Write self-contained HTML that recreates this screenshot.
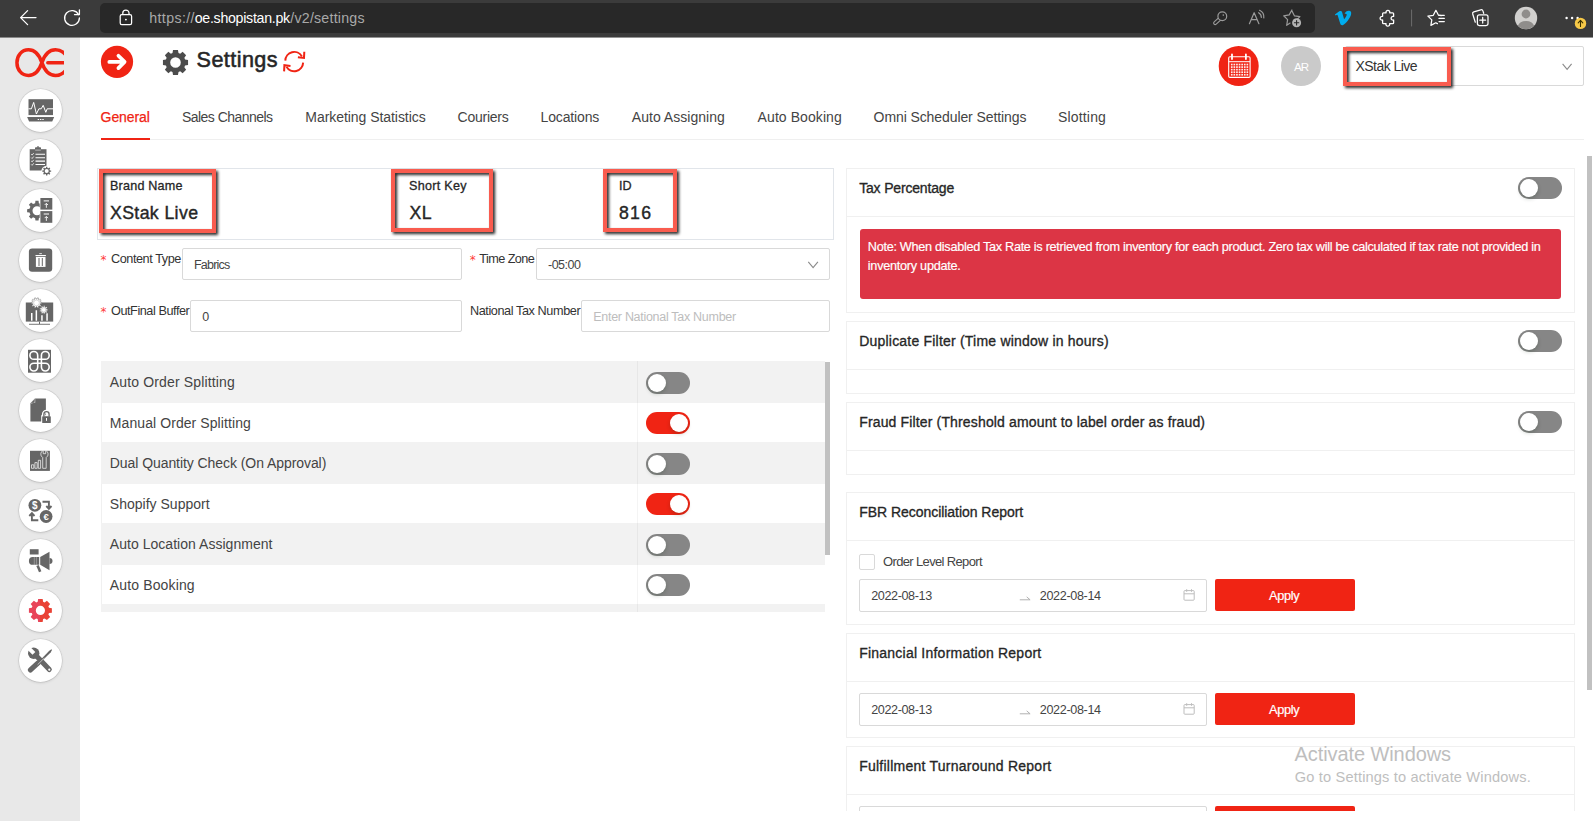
<!DOCTYPE html><html lang="en"><head>
<meta charset="utf-8">
<title>Settings</title>
<style>
*{box-sizing:border-box;margin:0;padding:0}
html,body{width:1593px;height:821px;overflow:hidden;background:#fff}
body{font-family:"Liberation Sans",sans-serif;font-size:14px;color:#2b2b2b;position:relative}
.a{position:absolute}
.sb{font-weight:normal;-webkit-text-stroke:0.45px currentColor}
#chrome{position:absolute;left:0;top:0;width:1593px;height:37px;background:#3b3b3b}
#urlbar{position:absolute;left:100px;top:3px;width:1215px;height:30px;background:#282828;border-radius:5px}
#chrome svg{position:absolute;overflow:visible}
#side{position:absolute;left:0;top:37px;width:80px;height:784px;background:#e8e8e8}
.ic{position:absolute;left:18px;width:44px;height:44px}
.ic::before{content:"";position:absolute;left:.7px;top:.7px;width:43px;height:43px;border-radius:50%;background:#fff;box-shadow:0 0 0 0.6px rgba(0,0,0,.10),0 1px 3px rgba(0,0,0,.12)}
.ic svg{position:absolute;left:0;top:0;width:44px;height:44px;overflow:visible}
.hl{position:absolute;border:4px solid #f95c4f;filter:drop-shadow(2.2px 2.6px 1.5px rgba(0,0,0,.85))}
.inp{position:absolute;height:32px;border:1px solid #d9d9d9;border-radius:2px;background:#fff}
.band{position:absolute;left:101px;width:724px;background:#f2f2f2}
.tg{position:absolute;width:44px;height:22px;border-radius:11px;background:#868686}
.tg i{position:absolute;left:2px;top:2px;width:18px;height:18px;border-radius:50%;background:#fff;box-shadow:0 2px 4px rgba(0,35,11,.2)}
.tg.on{background:#f02414}
.tg.on i{left:24px}
.card{position:absolute;left:846px;width:729px;border:1px solid #f0f0f0;background:#fff}
.card u{position:absolute;left:0;top:47px;width:727px;height:1px;background:#f0f0f0}
.btn{position:absolute;left:1215px;width:140px;height:32px;background:#f02414;border-radius:2px}
.rng{position:absolute;left:859px;width:348px;height:33px;border:1px solid #d9d9d9;border-radius:2px;background:#fff}
#clip{position:absolute;left:80px;top:37px;width:1513px;height:774px;overflow:hidden}
#pg{position:absolute;left:-80px;top:-37px;width:1593px;height:900px}
</style>
</head>
<body>
<div id="chrome">
  <div id="urlbar"></div>
  <svg style="left:0;top:0" width="1593" height="37" viewBox="0 0 1593 37" fill="none" stroke-linecap="round" stroke-linejoin="round">
    <!-- back -->
    <path d="M36 17.6H20.6M27.6 10.6l-7 7 7 7" stroke="#fff" stroke-width="1.3"></path>
    <!-- refresh -->
    <path d="M78.6 14.6A7.4 7.4 0 1 0 79.4 18" stroke="#fff" stroke-width="1.3"></path>
    <path d="M79.4 9.9v4.7h-4.9" stroke="#fff" stroke-width="1.3"></path>
    <!-- lock -->
    <rect x="120.2" y="14.6" width="11.4" height="10" rx="1.6" stroke="#fff" stroke-width="1.25"></rect>
    <path d="M122.8 14.4v-1.3a3.1 3.1 0 0 1 6.2 0v1.3" stroke="#fff" stroke-width="1.25"></path>
    <circle cx="125.9" cy="19.6" r="0.95" fill="#fff" stroke="none"></circle>
    <!-- key -->
    <path d="M1219.600 19l-4.400 4" stroke="#9b9b9b" stroke-width="4.200"></path>
    <path d="M1221 17.700l-5.800 5.300" stroke="#282828" stroke-width="1.900"></path>
    <circle cx="1222.300" cy="16.200" r="4.400" fill="#282828" stroke="#9b9b9b" stroke-width="1.200"></circle>
    <circle cx="1223.300" cy="15.100" r="0.800" fill="#9b9b9b" stroke="none"></circle>
    <!-- read aloud -->
    <g stroke="#9b9b9b" stroke-width="1.200">
      <path d="M1249.400 23.700l4.750-11 4.750 11M1251.200 19.600h5.900"></path>
      <path d="M1258.600 12.700a5 5 0 0 1 2.700 4.700M1259.600 10.300a7.600 7.600 0 0 1 4.200 7.600"></path>
    </g>
    <!-- star plus -->
    <path d="M1292 10.9l2.5 5 5.4 0.8-3.4 3.4M1290.1 23.1l-3.4 2.2 0.9-5.7-3.9-3.8 5.5-0.9 2.7-4.9" stroke="#9b9b9b" stroke-width="1.2"></path>
    <circle cx="1296.6" cy="22.7" r="4.5" fill="#b4b4b4" stroke="none"></circle>
    <path d="M1294.4 22.7h4.4M1296.6 20.5v4.4" stroke="#282828" stroke-width="1.1"></path>
    <!-- vimeo -->
    <path d="M1334.900 14.600L1339.300 11.300C1340.400 10.700 1341.700 10.800 1342.100 12.200L1344.100 19.200C1345.500 17.700 1346.800 15.700 1346.700 14.500C1346.600 13.600 1345.700 13.500 1344.600 14C1345.300 11.900 1347 10.700 1349 10.800C1350.800 10.900 1351.500 12.200 1351.100 14.200C1350.400 17.700 1346 23.600 1343.100 25C1341.600 25.600 1340.600 24.800 1340.200 23.600L1337.700 15.500C1337.400 14.600 1336.800 14.700 1335.700 15.600Z" fill="#00adef" stroke="none"></path>
    <!-- puzzle -->
    <path d="M1383.500 12.800H1386.100a1.900 1.900 0 1 1 3.600 0H1392.700a0.900 0.900 0 0 1 0.900 0.900V16.400a1.900 1.900 0 1 0 0 3.600V22.700a0.900 0.900 0 0 1-0.900 0.900H1389.600a1.900 1.900 0 1 1-3.600 0H1383.500a0.900 0.900 0 0 1-0.900-0.900V20a1.900 1.900 0 1 1 0-3.600V13.700a0.900 0.900 0 0 1 0.900-0.900z" stroke="#fff" stroke-width="1.300"></path>
    <!-- separator -->
    <path d="M1411.600 10v16" stroke="#6e6e6e" stroke-width="1"></path>
    <!-- favorites -->
    <path d="M1441.200 15.600l-2.700-0.400-2.600-4.900-2.600 5-5.400 0.800 3.900 3.800-0.900 5.500 4.900-2.600 1.600 0.800" stroke="#fff" stroke-width="1.250"></path>
    <path d="M1439 15.300h5.300M1439 18.400h5.300M1439 21.500h5.300" stroke="#fff" stroke-width="1.250"></path>
    <!-- collections -->
    <path d="M1475.300 22.200l-2.600-8.200a1.700 1.700 0 0 1 1.100-2.100l7-2.100a1.700 1.700 0 0 1 2.100 1.100l0.800 2.400" stroke="#fff" stroke-width="1.250"></path>
    <rect x="1477.400" y="14.900" width="10.600" height="10.600" rx="1.900" stroke="#fff" stroke-width="1.250"></rect>
    <path d="M1479.800 20.200h5.800M1482.700 17.300v5.800" stroke="#fff" stroke-width="1.250"></path>
    <!-- profile -->
    <circle cx="1526" cy="18" r="11.200" fill="#d1d0ce" stroke="none"></circle>
    <circle cx="1526" cy="14" r="4.400" fill="#8f8d8b" stroke="none"></circle>
    <path d="M1517.900 25.700a8.400 6.400 0 0 1 16.200 0a11.200 11.200 0 0 1-16.200 0z" fill="#8f8d8b" stroke="none"></path>
    <!-- dots -->
    <circle cx="1566.600" cy="18" r="1.200" fill="#fff" stroke="none"></circle>
    <circle cx="1572.100" cy="18" r="1.200" fill="#fff" stroke="none"></circle>
    <circle cx="1577.600" cy="18" r="1.200" fill="#fff" stroke="none"></circle>
    <circle cx="1580.500" cy="23.400" r="5.700" fill="#f7c948" stroke="none"></circle>
    <path d="M1580.500 26.400v-5.800M1578.200 22.800l2.300-2.400 2.300 2.400" stroke="#3a3000" stroke-width="1.100"></path>
  </svg>
  <span style="color: rgb(169, 169, 169); position: absolute; white-space: nowrap; font-size: 14.2px; line-height: 1; left: 149.3px; top: 11.01px; letter-spacing: 0.372px;">https://</span>
  <span style="color: rgb(255, 255, 255); position: absolute; white-space: nowrap; font-size: 14.2px; line-height: 1; left: 194.7px; top: 11.01px; letter-spacing: -0.278px;">oe.shopistan.pk</span>
  <span style="color: rgb(169, 169, 169); position: absolute; white-space: nowrap; font-size: 14.2px; line-height: 1; left: 290.3px; top: 11.01px; letter-spacing: 0.221px;">/v2/settings</span>
</div>

<div id="side">
<svg class="a" style="left:0;top:0;overflow:hidden" width="64.3" height="60" viewBox="0 37 64.3 60" fill="none"><path d="M66.500 69.500C63.500 73.500 59.500 75.450 55.500 75.450C48.200 75.450 44.300 69.700 41.900 62.650C39.500 55.600 35.700 49.850 28.500 49.850C21.600 49.850 16.950 55.700 16.950 62.650C16.950 69.600 21.600 75.450 28.500 75.450C35.700 75.450 39.500 69.700 41.900 62.650C44.300 55.600 48.200 49.850 55.500 49.850C59.500 49.850 63.500 51.800 66.500 55.800M47.800 62.650H66" stroke="#f02414" stroke-width="3.500" stroke-linecap="round"></path></svg>
<div class="ic" style="top:51px"><svg viewBox="0 0 44 44" fill="#666"><rect x="10.500" y="11.200" width="24.500" height="15.900"></rect><path d="M9.100 28.900h27.100l-2 4.600h-23.100z"></path><path d="M10.500 20.800h2.900l2.300-6.400 2.700 11.600 2.500-5.200h2.300l2-3.500 2.600 7 1.400-3.500h5.800" fill="none" stroke="#fff" stroke-width="1"></path><rect x="19.700" y="31" width="1.400" height="1" fill="#fff"></rect><rect x="22" y="31" width="1.400" height="1" fill="#fff"></rect><rect x="24.300" y="31" width="1.400" height="1" fill="#fff"></rect></svg></div>
<div class="ic" style="top:101px"><svg viewBox="0 0 44 44" fill="#666"><rect x="11.700" y="11.200" width="16.800" height="21.300"></rect><rect x="17" y="9.300" width="6" height="3" rx="0.800"></rect><rect x="19.400" y="8" width="1.200" height="2"></rect><rect x="17.200" y="11.600" width="5.600" height="1" fill="#fff" opacity=".55"></rect>
<path d="M17.500 16.300h9.500M17.500 19.700h9.500M17.500 23.100h9.500M17.500 26.500h9.500" stroke="#fff" stroke-width="1.100"></path><path d="M13.200 16.200l0.900 0.900 1.600-2M13.200 19.600l0.900 0.900 1.600-2M13.200 23l0.900 0.900 1.600-2M13.200 26.400l0.900 0.900 1.600-2" fill="none" stroke="#fff" stroke-width="0.800"></path>
<circle cx="28.700" cy="33.100" r="5.300" fill="#fff"></circle><path d="M31.92 32.38L33.16 32.47L33.16 33.73L31.92 33.82L31.49 34.87L32.30 35.80L31.40 36.70L30.47 35.89L29.42 36.32L29.33 37.56L28.07 37.56L27.98 36.32L26.93 35.89L26.00 36.70L25.10 35.80L25.91 34.87L25.48 33.82L24.24 33.73L24.24 32.47L25.48 32.38L25.91 31.33L25.10 30.40L26.00 29.50L26.93 30.31L27.98 29.88L28.07 28.64L29.33 28.64L29.42 29.88L30.47 30.31L31.40 29.50L32.30 30.40L31.49 31.33ZM26.70 33.10a2.00 2.00 0 1 0 4.00 0a2.00 2.00 0 1 0 -4.00 0Z" fill-rule="evenodd"></path></svg></div>
<div class="ic" style="top:151px"><svg viewBox="0 0 44 44" fill="#666"><path d="M26.47 20.83L28.88 21.14L28.88 24.26L26.47 24.57L25.60 26.66L27.09 28.58L24.88 30.79L22.96 29.30L20.87 30.17L20.56 32.58L17.44 32.58L17.13 30.17L15.04 29.30L13.12 30.79L10.91 28.58L12.40 26.66L11.53 24.57L9.12 24.26L9.12 21.14L11.53 20.83L12.40 18.74L10.91 16.82L13.12 14.61L15.04 16.10L17.13 15.23L17.44 12.82L20.56 12.82L20.87 15.23L22.96 16.10L24.88 14.61L27.09 16.82L25.60 18.74ZM14.50 22.70a4.50 4.50 0 1 0 9.00 0a4.50 4.50 0 1 0 -9.00 0Z" fill-rule="evenodd"></path><rect x="21.700" y="9" width="14" height="27" fill="#fff"></rect><rect x="22.400" y="10" width="11.900" height="11.600"></rect><rect x="22.400" y="23.100" width="11.900" height="11.700"></rect>
<path d="M25.700 12.900h5.300M25.700 26h5.300" stroke="#fff" stroke-width="1"></path><path d="M28.350 19.800v-4.200M26.700 17l1.650-1.700 1.650 1.700M28.350 32.900v-4.200M26.700 30.100l1.650-1.700 1.650 1.700" fill="none" stroke="#fff" stroke-width="0.900"></path></svg></div>
<div class="ic" style="top:201px"><svg viewBox="0 0 44 44" fill="#666"><rect x="10.900" y="10.400" width="23.300" height="23.300" rx="3.200"></rect><rect x="17.500" y="17" width="10.400" height="1.100" fill="#fff"></rect><rect x="21.300" y="15.300" width="2.600" height="0.800" fill="#fff"></rect><rect x="17.900" y="18.900" width="9.600" height="10" fill="#fff"></rect><rect x="20.500" y="20" width="1" height="8"></rect><rect x="23.800" y="20" width="1" height="8"></rect></svg></div>
<div class="ic" style="top:251px"><svg viewBox="0 0 44 44" fill="#666"><rect x="7.800" y="14.500" width="27.400" height="19.100"></rect><path d="M13 32.800v-7.800h1.500v7.800zM17.600 32.800v-10.500h1.500v10.500zM23.200 32.800v-5.500h1.500v5.500zM28.300 32.800v-7.500h1.500v7.500z" fill="#fff"></path>
<path d="M22.33 14.14L23.66 14.25L23.66 15.55L22.33 15.66L22.04 16.53L23.06 17.41L22.29 18.46L21.15 17.76L20.41 18.30L20.71 19.61L19.47 20.01L18.96 18.77L18.04 18.77L17.53 20.01L16.29 19.61L16.59 18.30L15.85 17.76L14.71 18.46L13.94 17.41L14.96 16.53L14.67 15.66L13.34 15.55L13.34 14.25L14.67 14.14L14.96 13.27L13.94 12.39L14.71 11.34L15.85 12.04L16.59 11.50L16.29 10.19L17.53 9.79L18.04 11.03L18.96 11.03L19.47 9.79L20.71 10.19L20.41 11.50L21.15 12.04L22.29 11.34L23.06 12.39L22.04 13.27Z" fill="#fff" stroke="#666" stroke-width="0.500"></path><circle cx="18.500" cy="14.900" r="2.900" fill="#fff" stroke="#999" stroke-width="0.400"></circle>
<path d="M28.73 21.13L29.86 21.22L29.86 22.38L28.73 22.47L28.45 23.23L29.26 24.03L28.51 24.92L27.59 24.26L26.89 24.66L27.00 25.79L25.85 26.00L25.56 24.90L24.77 24.76L24.13 25.69L23.11 25.11L23.61 24.09L23.09 23.47L21.99 23.77L21.59 22.67L22.63 22.20L22.63 21.40L21.59 20.93L21.99 19.83L23.09 20.13L23.61 19.51L23.11 18.49L24.13 17.91L24.77 18.84L25.56 18.70L25.85 17.60L27.00 17.81L26.89 18.94L27.59 19.34L28.51 18.68L29.26 19.57L28.45 20.37Z" fill="#fff" stroke="#666" stroke-width="0.500"></path><circle cx="25.700" cy="21.800" r="2.200" fill="#fff" stroke="#999" stroke-width="0.400"></circle>
<rect x="21" y="33.600" width="1" height="2.400"></rect><rect x="11" y="35.800" width="21" height="0.900"></rect></svg></div>
<div class="ic" style="top:301px"><svg viewBox="0 0 44 44" fill="#666"><rect x="10" y="11.800" width="23" height="22.900"></rect><path d="M19.700 21.300h3.700v3.900h-3.700zM19.700 21.300v-3.900a3.900 3.900 0 1 0-3.900 3.900zM23.400 21.300h3.900a3.900 3.900 0 1 0-3.900-3.900zM23.400 25.200v3.900a3.900 3.900 0 1 0 3.900-3.900zM19.700 25.200h-3.900a3.900 3.900 0 1 0 3.900 3.900z" fill="none" stroke="#fff" stroke-width="1.600"></path></svg></div>
<div class="ic" style="top:351px"><svg viewBox="0 0 44 44" fill="#666"><path d="M17 10.600h10.900v23h-15.500v-18.400z"></path><path d="M12.400 15.600l4.800-5.200v4.300z" fill="#fff"></path><path d="M12.900 15.100l4-4.300 -0.300 4z"></path><rect x="23.200" y="27.200" width="10.600" height="8.800" fill="#fff"></rect><path d="M25.600 28.500v-2.200a2.900 2.900 0 0 1 5.800 0v2.200" fill="none" stroke="#fff" stroke-width="3.400"></path><path d="M25.900 28.500v-2.200a2.600 2.600 0 0 1 5.200 0v2.200" fill="none" stroke="#666" stroke-width="1.300"></path><rect x="24.200" y="28.300" width="8.600" height="6.700" rx="0.600"></rect><rect x="28" y="30" width="1" height="2.800" fill="#fff"></rect></svg></div>
<div class="ic" style="top:401px"><svg viewBox="0 0 44 44" fill="#666"><rect x="12" y="12.800" width="19.900" height="20.100"></rect><path d="M13.500 30.300v-3.500h2.300v3.500zM16.900 30.300v-5.700h2.300v5.700zM20.300 30.300v-8h2.300v8z" fill="none" stroke="#fff" stroke-width="0.700"></path><path d="M24.700 30.300V19.500A4 4 0 0 1 25.200 12.400V15.700H27.700V12.400A4 4 0 0 1 28.200 19.500V30.300Z" fill="#666" stroke="#fff" stroke-width="0.700"></path></svg></div>
<div class="ic" style="top:451px"><svg viewBox="0 0 44 44" fill="#666"><circle cx="16.900" cy="17.300" r="6.400"></circle><circle cx="28.100" cy="28.500" r="6.400"></circle><path d="M24.500 13.700h6.400v6.200M28.300 18l2.600 2.800 2.600-2.800" fill="none" stroke="#666" stroke-width="1.900"></path><path d="M20.300 32.300h-6.400v-6.200M11.300 28l2.600-2.800 2.600 2.800" fill="none" stroke="#666" stroke-width="1.900"></path>
<text x="16.900" y="21" font-family="Liberation Sans, sans-serif" font-size="10" font-weight="bold" fill="#fff" text-anchor="middle">$</text><text x="28.100" y="32" font-family="Liberation Sans, sans-serif" font-size="9.500" font-weight="bold" fill="#fff" text-anchor="middle">€</text></svg></div>
<div class="ic" style="top:501px"><svg viewBox="0 0 44 44" fill="#666"><rect x="11.800" y="11.200" width="8.800" height="5.300"></rect><path d="M14.800 19h6.400v7.800h-6.400a3.900 3.900 0 0 1 0-7.800z"></path><path d="M22.200 19l9.300-5.300v18.600l-9.300-5.500z"></path><path d="M31.500 20a3 3 0 0 1 0 6z"></path><path d="M19.500 27.500l2.700 6.200" stroke="#666" stroke-width="2.600" fill="none"></path><path d="M16.300 19v7.800M18.400 19v7.800" stroke="#fff" stroke-width="0.500" opacity=".6"></path></svg></div>
<div class="ic" style="top:551px"><svg viewBox="0 0 44 44" fill="#666"><defs><linearGradient id="rg" x1="0" x2="1" y1="0" y2="0"><stop offset="0.480" stop-color="#e8445a"></stop><stop offset="0.480" stop-color="#e94235"></stop></linearGradient></defs><path d="M30.99 19.70L33.88 20.14L33.88 24.66L30.99 25.10L30.38 26.56L32.12 28.92L28.92 32.12L26.56 30.38L25.10 30.99L24.66 33.88L20.14 33.88L19.70 30.99L18.24 30.38L15.88 32.12L12.68 28.92L14.42 26.56L13.81 25.10L10.92 24.66L10.92 20.14L13.81 19.70L14.42 18.24L12.68 15.88L15.88 12.68L18.24 14.42L19.70 13.81L20.14 10.92L24.66 10.92L25.10 13.81L26.56 14.42L28.92 12.68L32.12 15.88L30.38 18.24ZM17.80 22.40a4.60 4.60 0 1 0 9.20 0a4.60 4.60 0 1 0 -9.20 0Z" fill="url(#rg)" fill-rule="evenodd"></path></svg></div>
<div class="ic" style="top:601px"><svg viewBox="0 0 44 44" fill="#666"><path d="M33.400 11.300l0.600 0.600-1.200 2.300-10.300 10.300-1.300-1.300 10.100-10.500z"></path><path d="M20.100 24.900l-7.600 7" stroke="#666" stroke-width="5.200" stroke-linecap="round"></path><path d="M21.600 22.600l-3.300 3.300 1.800 1.800 3.300-3.300z"></path><path d="M18 17.500l13.300 14" stroke="#666" stroke-width="5" stroke-linecap="round"></path><circle cx="15.700" cy="15.200" r="5.700"></circle><path d="M15.900 15.400l-6.500-6.500" stroke="#fff" stroke-width="4"></path><circle cx="31.300" cy="31.700" r="1.100" fill="#fff"></circle><path d="M19.600 26.700l6.700-6.700" stroke="#fff" stroke-width="0.600"></path></svg></div>
<path d="M12.200 14.300l3.200 3.200 3.300-0.800 0.800-3.300-3.200-3.200a5.600 5.600 0 0 1 6.300 7.700l11.300 11a2.500 2.500 0 0 1-3.600 3.600l-11-11.300a5.600 5.600 0 0 1-7.100-6.900z"><circle cx="32" cy="32.400" r="1.100" fill="#fff"><path d="M21 25.300l3.700-3.700" stroke="#fff" stroke-width="0.700"></path></circle></path></div>

<div class="a" style="left:0;top:37px;width:1593px;height:1px;background:rgba(59,59,59,.55);z-index:5"></div>
<div id="clip"><div id="pg">

<svg class="a" style="left:0;top:0;overflow:visible" width="1593" height="160" viewBox="0 0 1593 160" fill="none">
  <circle cx="117" cy="61.800" r="16.100" fill="#f02414"></circle>
  <path d="M109.300 61.900h14.500M118.400 55.700l6.200 6.200-6.200 6.200" stroke="#fff" stroke-width="3.700" stroke-linecap="round" stroke-linejoin="round"></path>
  <path d="M185.04 59.50L188.06 60.02L188.06 64.98L185.04 65.50L184.37 67.13L186.13 69.63L182.63 73.13L180.13 71.37L178.50 72.04L177.98 75.06L173.02 75.06L172.50 72.04L170.87 71.37L168.37 73.13L164.87 69.63L166.63 67.13L165.96 65.50L162.94 64.98L162.94 60.02L165.96 59.50L166.63 57.87L164.87 55.37L168.37 51.87L170.87 53.63L172.50 52.96L173.02 49.94L177.98 49.94L178.50 52.96L180.13 53.63L182.63 51.87L186.13 55.37L184.37 57.87ZM170.20 62.50a5.30 5.30 0 1 0 10.60 0a5.30 5.30 0 1 0 -10.60 0Z" fill="#4c4c4c" fill-rule="evenodd"></path>
  <g stroke="#f02414" stroke-width="2" stroke-linecap="butt" stroke-linejoin="miter">
    <path d="M285.300 60.600A8.900 8.900 0 0 1 301.900 56.400"></path>
    <path d="M304.300 51.800l-0.300 6.200-6.100-0.700"></path>
    <path d="M303.100 62.600A8.900 8.900 0 0 1 286.500 66.800"></path>
    <path d="M284.100 71.400l0.300-6.200 6.100 0.700"></path>
  </g>
  <circle cx="1238.700" cy="66" r="20" fill="#f02414"></circle>
  <rect x="1228.700" y="56.800" width="21.400" height="20.600" rx="1.200" stroke="#fff" stroke-width="1.100"></rect>
  <path d="M1228.700 61.700h21.400" stroke="#fff" stroke-width="1"></path>
  <path d="M1232 54.300v4.700M1245.900 54.300v4.700" stroke="#fff" stroke-width="1.800" stroke-linecap="round"></path>
  <g fill="#fff" opacity=".92"><rect x="1230.90" y="63.70" width="1.700" height="1.700"></rect><rect x="1233.50" y="63.70" width="1.700" height="1.700"></rect><rect x="1236.10" y="63.70" width="1.700" height="1.700"></rect><rect x="1238.70" y="63.70" width="1.700" height="1.700"></rect><rect x="1241.30" y="63.70" width="1.700" height="1.700"></rect><rect x="1243.90" y="63.70" width="1.700" height="1.700"></rect><rect x="1246.50" y="63.70" width="1.700" height="1.700"></rect><rect x="1230.90" y="66.25" width="1.700" height="1.700"></rect><rect x="1233.50" y="66.25" width="1.700" height="1.700"></rect><rect x="1236.10" y="66.25" width="1.700" height="1.700"></rect><rect x="1238.70" y="66.25" width="1.700" height="1.700"></rect><rect x="1241.30" y="66.25" width="1.700" height="1.700"></rect><rect x="1243.90" y="66.25" width="1.700" height="1.700"></rect><rect x="1246.50" y="66.25" width="1.700" height="1.700"></rect><rect x="1230.90" y="68.80" width="1.700" height="1.700"></rect><rect x="1233.50" y="68.80" width="1.700" height="1.700"></rect><rect x="1236.10" y="68.80" width="1.700" height="1.700"></rect><rect x="1238.70" y="68.80" width="1.700" height="1.700"></rect><rect x="1241.30" y="68.80" width="1.700" height="1.700"></rect><rect x="1243.90" y="68.80" width="1.700" height="1.700"></rect><rect x="1246.50" y="68.80" width="1.700" height="1.700"></rect><rect x="1230.90" y="71.35" width="1.700" height="1.700"></rect><rect x="1233.50" y="71.35" width="1.700" height="1.700"></rect><rect x="1236.10" y="71.35" width="1.700" height="1.700"></rect><rect x="1238.70" y="71.35" width="1.700" height="1.700"></rect><rect x="1241.30" y="71.35" width="1.700" height="1.700"></rect><rect x="1243.90" y="71.35" width="1.700" height="1.700"></rect><rect x="1246.50" y="71.35" width="1.700" height="1.700"></rect><rect x="1230.90" y="73.90" width="1.700" height="1.700"></rect><rect x="1233.50" y="73.90" width="1.700" height="1.700"></rect><rect x="1236.10" y="73.90" width="1.700" height="1.700"></rect><rect x="1238.70" y="73.90" width="1.700" height="1.700"></rect><rect x="1241.30" y="73.90" width="1.700" height="1.700"></rect><rect x="1243.90" y="73.90" width="1.700" height="1.700"></rect><rect x="1246.50" y="73.90" width="1.700" height="1.700"></rect></g>
  <circle cx="1301" cy="66" r="20" fill="#cacaca"></circle>
  <path d="M1562.600 63.900l4.500 5.400 4.500-5.400" stroke="#8a8a8a" stroke-width="1.100"></path>
</svg>
<span class="sb" style="color: rgb(38, 38, 38); -webkit-text-stroke-width: 0.55px; position: absolute; white-space: nowrap; font-size: 21.6px; line-height: 1; left: 196.6px; top: 49.01px; letter-spacing: 0.424px;">Settings</span>
<span style="color: rgb(255, 255, 255); position: absolute; white-space: nowrap; font-size: 11.6px; line-height: 1; left: 1294px; top: 61.01px; letter-spacing: -0.909px;">AR</span>
<div class="a" style="left:1345px;top:46px;width:239px;height:40px;border:1px solid #d9d9d9;border-radius:2px"></div>
<span style="color: rgb(51, 51, 51); position: absolute; white-space: nowrap; font-size: 14px; line-height: 1; left: 1355.5px; top: 59.01px; letter-spacing: -0.549px;">XStak Live</span>
<div class="hl" style="left:1343.200px;top:47.200px;width:107.400px;height:38.800px"></div>
<div class="a" style="left:101px;top:139px;width:1483px;height:1px;background:#efefef"></div>
<div class="a" style="left:101px;top:138px;width:49px;height:2px;background:#f02414"></div>
<span style="color: rgb(240, 36, 20); -webkit-text-stroke: 0.25px rgb(240, 36, 20); position: absolute; white-space: nowrap; font-size: 14px; line-height: 1; left: 100.6px; top: 110.01px; letter-spacing: -0.102px;">General</span>
<span style="color: rgb(68, 68, 68); position: absolute; white-space: nowrap; font-size: 14px; line-height: 1; left: 182px; top: 110.01px; letter-spacing: -0.543px;">Sales Channels</span>
<span style="color: rgb(68, 68, 68); position: absolute; white-space: nowrap; font-size: 14px; line-height: 1; left: 305.3px; top: 110.01px; letter-spacing: -0.051px;">Marketing Statistics</span>
<span style="color: rgb(68, 68, 68); position: absolute; white-space: nowrap; font-size: 14px; line-height: 1; left: 457.5px; top: 110.01px; letter-spacing: -0.229px;">Couriers</span>
<span style="color: rgb(68, 68, 68); position: absolute; white-space: nowrap; font-size: 14px; line-height: 1; left: 540.6px; top: 110.01px; letter-spacing: -0.155px;">Locations</span>
<span style="color: rgb(68, 68, 68); position: absolute; white-space: nowrap; font-size: 14px; line-height: 1; left: 631.8px; top: 110.01px; letter-spacing: 0.029px;">Auto Assigning</span>
<span style="color: rgb(68, 68, 68); position: absolute; white-space: nowrap; font-size: 14px; line-height: 1; left: 757.6px; top: 110.01px; letter-spacing: 0.082px;">Auto Booking</span>
<span style="color: rgb(68, 68, 68); position: absolute; white-space: nowrap; font-size: 14px; line-height: 1; left: 873.6px; top: 110.01px; letter-spacing: -0.094px;">Omni Scheduler Settings</span>
<span style="color: rgb(68, 68, 68); position: absolute; white-space: nowrap; font-size: 14px; line-height: 1; left: 1058px; top: 110.01px; letter-spacing: 0.171px;">Slotting</span>
<div class="a" style="left:1587px;top:156px;width:5px;height:534px;background:#c1c1c1"></div>

<div class="a" style="left:97px;top:168px;width:737px;height:72px;border:1px solid #e1e5ea"></div>
<span class="sb" style="color: rgb(38, 38, 38); -webkit-text-stroke-width: 0.3px; position: absolute; white-space: nowrap; font-size: 12.6px; line-height: 1; left: 110px; top: 180.01px; letter-spacing: 0.2px;">Brand Name</span>
<span class="sb" style="color: rgb(38, 38, 38); -webkit-text-stroke-width: 0.4px; position: absolute; white-space: nowrap; font-size: 17.7px; line-height: 1; left: 110px; top: 205.01px; letter-spacing: 0.382px;">XStak Live</span>
<span class="sb" style="color: rgb(38, 38, 38); -webkit-text-stroke-width: 0.3px; position: absolute; white-space: nowrap; font-size: 12.6px; line-height: 1; left: 409px; top: 180.01px; letter-spacing: 0.273px;">Short Key</span>
<span class="sb" style="color: rgb(38, 38, 38); -webkit-text-stroke-width: 0.4px; position: absolute; white-space: nowrap; font-size: 17.7px; line-height: 1; left: 409.5px; top: 205.01px; letter-spacing: 0.359px;">XL</span>
<span class="sb" style="color: rgb(38, 38, 38); -webkit-text-stroke-width: 0.3px; position: absolute; white-space: nowrap; font-size: 12.6px; line-height: 1; left: 619px; top: 180.01px; letter-spacing: -0.094px;">ID</span>
<span class="sb" style="color: rgb(38, 38, 38); -webkit-text-stroke-width: 0.4px; position: absolute; white-space: nowrap; font-size: 17.7px; line-height: 1; left: 619px; top: 205.01px; letter-spacing: 1.242px;">816</span>
<div class="hl" style="left:99.300px;top:169.200px;width:116.600px;height:63.600px"></div>
<div class="hl" style="left:391.300px;top:169.200px;width:101.600px;height:62.600px"></div>
<div class="hl" style="left:603.300px;top:169.200px;width:74px;height:62.600px"></div>

<span style="color: rgb(255, 59, 59); font-family: &quot;DejaVu Sans&quot;, sans-serif; position: absolute; white-space: nowrap; font-size: 12px; line-height: 1; left: 100.5px; top: 254px;">*</span>
<span style="color: rgb(51, 51, 51); position: absolute; white-space: nowrap; font-size: 12.7px; line-height: 1; left: 111px; top: 253px; letter-spacing: -0.45px;">Content Type</span>
<div class="inp" style="left:182px;top:248px;width:280px"></div>
<span style="color: rgb(68, 68, 68); position: absolute; white-space: nowrap; font-size: 12.5px; line-height: 1; left: 194px; top: 259.01px; letter-spacing: -0.797px;">Fabrics</span>
<span style="color: rgb(255, 59, 59); font-family: &quot;DejaVu Sans&quot;, sans-serif; position: absolute; white-space: nowrap; font-size: 12px; line-height: 1; left: 469.7px; top: 254px;">*</span>
<span style="color: rgb(51, 51, 51); position: absolute; white-space: nowrap; font-size: 12.7px; line-height: 1; left: 479.3px; top: 253px; letter-spacing: -0.571px;">Time Zone</span>
<div class="inp" style="left:536px;top:248px;width:294px"></div>
<span style="color: rgb(68, 68, 68); position: absolute; white-space: nowrap; font-size: 12.5px; line-height: 1; left: 548px; top: 259.01px; letter-spacing: -0.511px;">-05:00</span>
<svg class="a" style="left:806px;top:259px" width="14" height="12" viewBox="806 259 14 12" fill="none"><path d="M808.300 261.800l4.800 5.900 4.800-5.900" stroke="#8a8a8a" stroke-width="1.100"></path></svg>

<span style="color: rgb(255, 59, 59); font-family: &quot;DejaVu Sans&quot;, sans-serif; position: absolute; white-space: nowrap; font-size: 12px; line-height: 1; left: 100.5px; top: 306px;">*</span>
<span style="color: rgb(51, 51, 51); position: absolute; white-space: nowrap; font-size: 12.7px; line-height: 1; left: 111px; top: 305.01px; letter-spacing: -0.451px;">OutFinal Buffer</span>
<div class="inp" style="left:190px;top:300px;width:272px"></div>
<span style="color: rgb(68, 68, 68); position: absolute; white-space: nowrap; font-size: 12.5px; line-height: 1; left: 202.3px; top: 311px;">0</span>
<span style="color: rgb(51, 51, 51); position: absolute; white-space: nowrap; font-size: 12.7px; line-height: 1; left: 469.9px; top: 305.01px; letter-spacing: -0.414px;">National Tax Number</span>
<div class="inp" style="left:581px;top:300px;width:249px"></div>
<span style="color: rgb(189, 189, 189); position: absolute; white-space: nowrap; font-size: 12.5px; line-height: 1; left: 593.3px; top: 311px; letter-spacing: -0.293px;">Enter National Tax Number</span>

<div class="a" style="left:101px;top:361px;width:724px;height:251px;border-left:1px solid #f0f0f0"></div>
<div class="band" style="top:361px;height:41.600px"></div>
<div class="band" style="top:442px;height:41.700px"></div>
<div class="band" style="top:522.800px;height:42.200px"></div>
<div class="band" style="top:603.900px;height:8px"></div>
<div class="a" style="left:637px;top:361px;width:1px;height:251px;background:rgba(0,0,0,.045)"></div>
<div class="a" style="left:825px;top:362px;width:5px;height:193px;background:#c1c1c1"></div>
<span style="color: rgb(68, 68, 68); position: absolute; white-space: nowrap; font-size: 14px; line-height: 1; left: 109.8px; top: 375.01px; letter-spacing: 0.149px;">Auto Order Splitting</span>
<span style="color: rgb(68, 68, 68); position: absolute; white-space: nowrap; font-size: 14px; line-height: 1; left: 109.8px; top: 416.01px; letter-spacing: 0.081px;">Manual Order Splitting</span>
<span style="color: rgb(68, 68, 68); position: absolute; white-space: nowrap; font-size: 14px; line-height: 1; left: 109.8px; top: 456.01px; letter-spacing: -0.067px;">Dual Quantity Check (On Approval)</span>
<span style="color: rgb(68, 68, 68); position: absolute; white-space: nowrap; font-size: 14px; line-height: 1; left: 109.8px; top: 497px; letter-spacing: 0.012px;">Shopify Support</span>
<span style="color: rgb(68, 68, 68); position: absolute; white-space: nowrap; font-size: 14px; line-height: 1; left: 109.8px; top: 537.01px; letter-spacing: 0.035px;">Auto Location Assignment</span>
<span style="color: rgb(68, 68, 68); position: absolute; white-space: nowrap; font-size: 14px; line-height: 1; left: 109.8px; top: 578.01px; letter-spacing: 0.137px;">Auto Booking</span>
<div class="tg" style="left:646px;top:372px"><i></i></div>
<div class="tg on" style="left:646px;top:411.800px"><i></i></div>
<div class="tg" style="left:646px;top:452.700px"><i></i></div>
<div class="tg on" style="left:646px;top:492.800px"><i></i></div>
<div class="tg" style="left:646px;top:534px"><i></i></div>
<div class="tg" style="left:646px;top:573.800px"><i></i></div>

<div class="card" style="top:168px;height:145px"><u></u></div>
<span class="sb" style="color: rgb(38, 38, 38); -webkit-text-stroke-width: 0.32px; position: absolute; white-space: nowrap; font-size: 14px; line-height: 1; left: 859.2px; top: 181px; letter-spacing: -0.177px;">Tax Percentage</span>
<div class="tg" style="left:1518px;top:177px"><i></i></div>
<div class="a" style="left:859.500px;top:228.700px;width:701.500px;height:70px;background:#dc3545;border-radius:3px"></div>
<span style="color: rgb(255, 255, 255); -webkit-text-stroke: 0.18px rgb(255, 255, 255); position: absolute; white-space: nowrap; font-size: 12.7px; line-height: 1; left: 867.8px; top: 241.01px; letter-spacing: -0.297px;">Note: When disabled Tax Rate is retrieved from inventory for each product. Zero tax will be calculated if tax rate not provided in</span>
<span style="color: rgb(255, 255, 255); -webkit-text-stroke: 0.18px rgb(255, 255, 255); position: absolute; white-space: nowrap; font-size: 12.7px; line-height: 1; left: 867.8px; top: 260px; letter-spacing: -0.271px;">inventory update.</span>
<div class="card" style="top:321px;height:73px"><u></u></div>
<span class="sb" style="color: rgb(38, 38, 38); -webkit-text-stroke-width: 0.32px; position: absolute; white-space: nowrap; font-size: 14px; line-height: 1; left: 859.2px; top: 334.01px; letter-spacing: 0.209px;">Duplicate Filter (Time window in hours)</span>
<div class="tg" style="left:1518px;top:330px"><i></i></div>
<div class="card" style="top:402px;height:73px"><u></u></div>
<span class="sb" style="color: rgb(38, 38, 38); -webkit-text-stroke-width: 0.32px; position: absolute; white-space: nowrap; font-size: 14px; line-height: 1; left: 859.2px; top: 415px; letter-spacing: 0.15px;">Fraud Filter (Threshold amount to label order as fraud)</span>
<div class="tg" style="left:1518px;top:411px"><i></i></div>
<div class="card" style="top:492px;height:133px"><u></u></div>
<span class="sb" style="color: rgb(38, 38, 38); -webkit-text-stroke-width: 0.32px; position: absolute; white-space: nowrap; font-size: 14px; line-height: 1; left: 859.2px; top: 505.01px; letter-spacing: -0.04px;">FBR Reconciliation Report</span>
<div class="a" style="left:859px;top:554px;width:16px;height:16px;border:1px solid #d9d9d9;border-radius:2px;background:#fff"></div>
<span style="color: rgb(68, 68, 68); position: absolute; white-space: nowrap; font-size: 13px; line-height: 1; left: 883px; top: 555.01px; letter-spacing: -0.645px;">Order Level Report</span>
<div class="rng" style="top:579.2px"></div>
<span style="color: rgb(68, 68, 68); position: absolute; white-space: nowrap; font-size: 12.6px; line-height: 1; left: 871.2px; top: 590px; letter-spacing: -0.38px;">2022-08-13</span>
<span style="color: rgb(68, 68, 68); position: absolute; white-space: nowrap; font-size: 12.6px; line-height: 1; left: 1039.8px; top: 590px; letter-spacing: -0.347px;">2022-08-14</span>
<svg class="a" style="left:1018px;top:587.2px" width="14" height="16" viewBox="0 0 14 16" fill="none"><path d="M1.800 12.800h10.300l-3.400-2.900" stroke="#adadad" stroke-width="0.950"></path></svg>
<svg class="a" style="left:1182px;top:588.2px" width="14" height="14" viewBox="0 0 14 14" fill="none" stroke="#bdbdbd" stroke-width="1"><rect x="2" y="2.600" width="10.200" height="9.600" rx="0.800"></rect><path d="M2 5.800h10.200M4.700 1.200v2.600M9.500 1.200v2.600"></path></svg>
<div class="btn" style="top:579.0px"></div>
<span style="color: rgb(255, 255, 255); -webkit-text-stroke: 0.2px rgb(255, 255, 255); position: absolute; white-space: nowrap; font-size: 12.8px; line-height: 1; left: 1269px; top: 590.01px; letter-spacing: -0.354px;">Apply</span>
<div class="card" style="top:633px;height:105px"><u></u></div>
<span class="sb" style="color: rgb(38, 38, 38); -webkit-text-stroke-width: 0.32px; position: absolute; white-space: nowrap; font-size: 14px; line-height: 1; left: 859.2px; top: 646px; letter-spacing: 0.227px;">Financial Information Report</span>
<div class="rng" style="top:693px"></div>
<span style="color: rgb(68, 68, 68); position: absolute; white-space: nowrap; font-size: 12.6px; line-height: 1; left: 871.2px; top: 704.01px; letter-spacing: -0.38px;">2022-08-13</span>
<span style="color: rgb(68, 68, 68); position: absolute; white-space: nowrap; font-size: 12.6px; line-height: 1; left: 1039.8px; top: 704.01px; letter-spacing: -0.347px;">2022-08-14</span>
<svg class="a" style="left:1018px;top:701px" width="14" height="16" viewBox="0 0 14 16" fill="none"><path d="M1.800 12.800h10.300l-3.400-2.900" stroke="#adadad" stroke-width="0.950"></path></svg>
<svg class="a" style="left:1182px;top:702px" width="14" height="14" viewBox="0 0 14 14" fill="none" stroke="#bdbdbd" stroke-width="1"><rect x="2" y="2.600" width="10.200" height="9.600" rx="0.800"></rect><path d="M2 5.800h10.200M4.700 1.200v2.600M9.500 1.200v2.600"></path></svg>
<div class="btn" style="top:692.8px"></div>
<span style="color: rgb(255, 255, 255); -webkit-text-stroke: 0.2px rgb(255, 255, 255); position: absolute; white-space: nowrap; font-size: 12.8px; line-height: 1; left: 1269px; top: 704.01px; letter-spacing: -0.354px;">Apply</span>
<div class="card" style="top:746px;height:130px"><u></u></div>
<span class="sb" style="color: rgb(38, 38, 38); -webkit-text-stroke-width: 0.32px; position: absolute; white-space: nowrap; font-size: 14px; line-height: 1; left: 859.2px; top: 759.01px; letter-spacing: 0.243px;">Fulfillment Turnaround Report</span>
<div class="rng" style="top:806px"></div>
<span style="color: rgb(68, 68, 68); position: absolute; white-space: nowrap; font-size: 12.6px; line-height: 1; left: 871.2px; top: 817.01px; letter-spacing: -0.38px;">2022-08-13</span>
<span style="color: rgb(68, 68, 68); position: absolute; white-space: nowrap; font-size: 12.6px; line-height: 1; left: 1039.8px; top: 817.01px; letter-spacing: -0.347px;">2022-08-14</span>
<svg class="a" style="left:1018px;top:814px" width="14" height="16" viewBox="0 0 14 16" fill="none"><path d="M1.800 12.800h10.300l-3.400-2.900" stroke="#adadad" stroke-width="0.950"></path></svg>
<svg class="a" style="left:1182px;top:815px" width="14" height="14" viewBox="0 0 14 14" fill="none" stroke="#bdbdbd" stroke-width="1"><rect x="2" y="2.600" width="10.200" height="9.600" rx="0.800"></rect><path d="M2 5.800h10.200M4.700 1.200v2.600M9.500 1.200v2.600"></path></svg>
<div class="btn" style="top:805.8px"></div>
<span style="color: rgb(255, 255, 255); -webkit-text-stroke: 0.2px rgb(255, 255, 255); position: absolute; white-space: nowrap; font-size: 12.8px; line-height: 1; left: 1269px; top: 817.01px; letter-spacing: -0.354px;">Apply</span>
<span style="color: rgb(190, 190, 190); position: absolute; white-space: nowrap; font-size: 20px; line-height: 1; left: 1294.5px; top: 744.01px; letter-spacing: -0.083px;">Activate Windows</span>
<span style="color: rgb(190, 190, 190); position: absolute; white-space: nowrap; font-size: 14.6px; line-height: 1; left: 1294.8px; top: 770.02px; letter-spacing: 0.165px;">Go to Settings to activate Windows.</span>
</div></div>


</body></html>
